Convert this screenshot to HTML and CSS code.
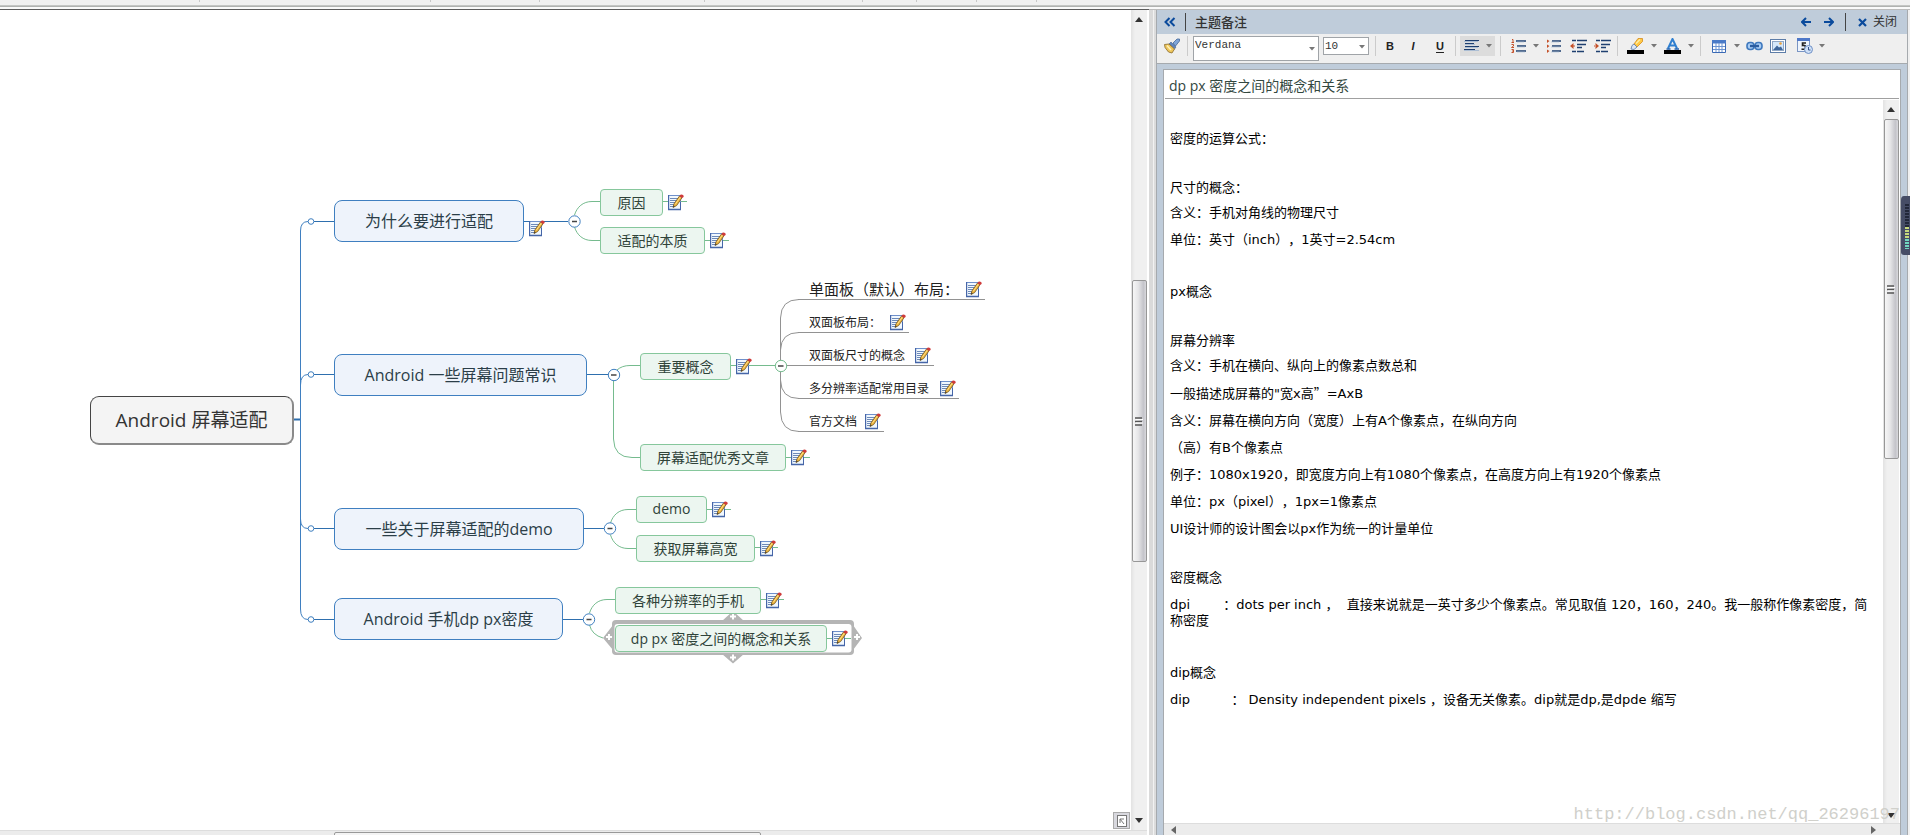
FILE: index.html
```html
<!DOCTYPE html>
<html lang="zh-CN">
<head>
<meta charset="utf-8">
<title>Android 屏幕适配</title>
<link rel="stylesheet" href="styles.css">
</head>
<body>
<svg class="defs" aria-hidden="true">
  <symbol id="note" viewBox="0 0 16 17">
    <rect x="0.5" y="1.5" width="12" height="14" fill="#f1f8fe" stroke="#6f90cb"/>
    <path d="M0.5 1V16M0 15.5H13" stroke="#4666a8" stroke-width="1.4"/>
    <path d="M12.5 8V16" stroke="#4666a8"/>
    <path d="M2 4.5H10M2 6.5H9M2 8.5H7M2 10.5H6M2 12.5H5" stroke="#6d89b8"/>
    <path d="M5 13.5L6 9.8L11.5 2L14 3.8L8.6 11.6Z" fill="#edb33a" stroke="#75551c" stroke-width=".8"/>
    <path d="M7.2 10.4L12.4 3" stroke="#ffe08a" stroke-width="1"/>
    <path d="M5 13.5L5.6 11.4L6.9 12.3Z" fill="#333"/>
    <path d="M11.4 2.2L12.4.8Q14 0 15.2 1.2T15 3.4L14 4Z" fill="#cf3b3b"/>
  </symbol>
  <symbol id="caret" viewBox="0 0 6 4"><path d="M0 0H6L3 3.5Z" fill="#777"/></symbol>
  <symbol id="up" viewBox="0 0 8 5"><path d="M0 5L4 0L8 5Z" fill="#333"/></symbol>
  <symbol id="down" viewBox="0 0 8 5"><path d="M0 0L4 5L8 0Z" fill="#333"/></symbol>
  <symbol id="grip" viewBox="0 0 8 9"><path d="M0 1H7M0 4.5H7M0 8H7" stroke="#555" stroke-width="1.4"/><path d="M1 2.5H8M1 6H8" stroke="#fff"/></symbol>
</svg>

<div class="strip">
  <i></i><i></i><i></i><i></i><i></i><i></i><i></i><i></i>
</div>

<div class="workspace">
  <main class="map-pane">
    <div class="canvas">
      <svg class="links" aria-hidden="true" fill="none">
        <g stroke="#2e6fae">
          <path d="M293 419.5H300" stroke-width="2"/>
          <path d="M300.5 419V231Q300.5 221.5 308 221.5M300.5 385Q300.5 374.5 308 374.5M300.5 419V519Q300.5 528.5 308 528.5M300.5 519V609Q300.5 619.5 308 619.5" stroke="#3f7fc0"/>
          <path d="M314 221.5H334M314 374.5H334M314 528.5H334M314 619.5H334"/>
          <path d="M524 221.5H568M587 374.5H608M584 528.5H604M563 619.5H583"/>
        </g>
        <g stroke="#75bb8e">
          <path d="M574.5 215C577 207 583 201.5 592 201.5H600M574.5 227C577 235 583 240.5 592 240.5H600"/>
          <path d="M617 370Q622 365.5 630 365.5H640M613.5 381V439Q614 457.5 632 457.5H640"/>
          <path d="M610.5 523C613 515 619 509.5 628 509.5H636M610.5 535C613 543 619 548.5 628 548.5H636"/>
          <path d="M589.5 613C592 605 598 599.5 607 599.5H615M589.5 625Q592 635 603 638"/>
          <path d="M663 201.5H687M705 240.5H729M731 365.5H775M786 457.5H810M707 509.5H731M755 547.5H778M761 599.5H784"/>
        </g>
        <g stroke="#929292">
          <path d="M780.5 360V318Q781 299.5 799 299.5M780.5 350Q781 332.5 799 332.5M787 365.5H799M780.5 380Q781 398.5 799 398.5M780.5 372V412Q781 431.5 799 431.5"/>
        </g>
        <g fill="#fff" stroke="#3f7fc0">
          <circle cx="311" cy="221.5" r="2.8"/><circle cx="311" cy="374.5" r="2.8"/><circle cx="311" cy="528.5" r="2.8"/><circle cx="311" cy="619.5" r="2.8"/>
          <circle cx="574.5" cy="221.5" r="5.7"/><circle cx="614" cy="375" r="5.7"/><circle cx="610" cy="528.5" r="5.7"/><circle cx="589" cy="619.5" r="5.7"/>
          <circle cx="781" cy="366" r="5.7" stroke="#75bb8e"/>
        </g>
        <path d="M572 221.5H577M611 375H616.5M607.5 528.5H612.5M586.5 619.5H591.5M778 366H783.5" stroke="#444" stroke-width="1.5"/>
        <path d="M722 621L733 611L744 621ZM722 654L733 663.5L744 654ZM613 625V650L603 638ZM853 625V650L862 638Z" fill="#b5b5b5"/>
        <rect x="612" y="620" width="242" height="35" rx="4" fill="#b5b5b5"/>
        <rect x="614.5" y="624" width="237" height="28.5" rx="3" fill="#fff"/>
        <path d="M730 616.5H736M733 613.5V619.5M730 657.5H736M733 654.5V660.5M606 637H612M609 634V640M854 637H860M857 634V640" stroke="#fff" stroke-width="2"/>
        <path d="M827 638.5H851" stroke="#75bb8e"/>
      </svg>

      <div class="root">Android 屏幕适配</div>

      <div class="main t1">为什么要进行适配</div>
      <svg class="note t1-note"><use href="#note"/></svg>
      <div class="main t2">Android 一些屏幕问题常识</div>
      <div class="main t3">一些关于屏幕适配的demo</div>
      <div class="main t4">Android 手机dp px密度</div>

      <div class="sub s1"><span>原因</span><svg class="note"><use href="#note"/></svg></div>
      <div class="sub s2"><span>适配的本质</span><svg class="note"><use href="#note"/></svg></div>
      <div class="sub s3"><span>重要概念</span><svg class="note"><use href="#note"/></svg></div>
      <div class="sub s4"><span>屏幕适配优秀文章</span><svg class="note"><use href="#note"/></svg></div>
      <div class="sub s5"><span>demo</span><svg class="note"><use href="#note"/></svg></div>
      <div class="sub s6"><span>获取屏幕高宽</span><svg class="note"><use href="#note"/></svg></div>
      <div class="sub s7"><span>各种分辨率的手机</span><svg class="note"><use href="#note"/></svg></div>
      <div class="sub s8"><span>dp px 密度之间的概念和关系</span><svg class="note"><use href="#note"/></svg></div>

      <div class="leaf l1"><span>单面板（默认）布局：</span><svg class="note"><use href="#note"/></svg></div>
      <div class="leaf l2"><span>双面板布局：</span><svg class="note"><use href="#note"/></svg></div>
      <div class="leaf l3"><span>双面板尺寸的概念</span><svg class="note"><use href="#note"/></svg></div>
      <div class="leaf l4"><span>多分辨率适配常用目录</span><svg class="note"><use href="#note"/></svg></div>
      <div class="leaf l5"><span>官方文档</span><svg class="note"><use href="#note"/></svg></div>

      <button class="overview" aria-label="缩略图"><svg width="10" height="12" viewBox="0 0 10 12" fill="none" stroke="#777"><rect x=".5" y=".5" width="9" height="11" fill="#fff"/><path d="M3 8V4H7M3 4L7 9"/></svg></button>
    </div>
    <div class="vbar map-vbar">
      <svg class="arrow"><use href="#up"/></svg>
      <div class="thumb"><svg class="grip"><use href="#grip"/></svg></div>
      <svg class="arrow"><use href="#down"/></svg>
    </div>
    <div class="map-hbar"><div class="hthumb"></div></div>
  </main>

  <div class="splitter"></div>

  <aside class="panel">
    <header class="panel-head">
      <button class="collapse" aria-label="折叠"><svg width="12" height="10" viewBox="0 0 12 10" fill="none" stroke="#0a4a9c" stroke-width="2"><path d="M5.5 1L1.5 5L5.5 9M10.5 1L6.5 5L10.5 9"/></svg></button>
      <i class="bar"></i>
      <h1>主题备注</h1>
      <button class="nav" aria-label="上一个"><svg width="10" height="10" viewBox="0 0 10 10" fill="none" stroke="#0a4a9c" stroke-width="2"><path d="M10 5H1.5M5 1L1 5L5 9"/></svg></button>
      <button class="nav" aria-label="下一个"><svg width="10" height="10" viewBox="0 0 10 10" fill="none" stroke="#0a4a9c" stroke-width="2"><path d="M0 5H8.5M5 1L9 5L5 9"/></svg></button>
      <i class="bar"></i>
      <button class="close"><svg width="9" height="9" viewBox="0 0 9 9" fill="none" stroke="#0a4a9c" stroke-width="2.2"><path d="M1 1L8 8M8 1L1 8"/></svg>关闭</button>
    </header>

    <div class="toolbar">
      <button aria-label="格式刷"><svg width="16" height="16" viewBox="0 0 16 16"><path d="M9 5L13 1H15.5V3L11.5 8Z" fill="#7fa5d8" stroke="#44689a" stroke-width=".8"/><path d="M7 4L12 9L10.5 11L5 6Z" fill="#5e84bd" stroke="#3f5f8e" stroke-width=".6"/><path d="M5 6L10.5 11L8 15L4.5 14L1 9.5L.5 6.5Z" fill="#eec65c" stroke="#8a6a28" stroke-width=".8"/><path d="M3 7.5L7 12" stroke="#fff1b8" stroke-width="1.5"/></svg></button>
      <i class="sep m6"></i>
      <label class="pick font m5"><select aria-label="字体"><option>Verdana</option></select><svg><use href="#caret"/></svg></label>
      <label class="pick size m4"><select aria-label="字号"><option>10</option></select><svg><use href="#caret"/></svg></label>
      <i class="sep m6"></i>
      <button class="m5 txt b" aria-label="加粗">B</button>
      <button class="m5 txt i" aria-label="斜体">I</button>
      <button class="m9 txt u" aria-label="下划线">U</button>
      <i class="sep m6"></i>
      <button class="align m4" aria-label="对齐"><svg width="16" height="12" viewBox="0 0 16 12"><path d="M1 .5H15M1 3.5H10M1 6.5H15M0 9.5H11" stroke="#1f3f6e"/><path d="M0 1.5H14M1 4.5H11M1 7.5H14M0 10.5H15" stroke="#9fb6d2" stroke-width=".8"/></svg><svg class="caret"><use href="#caret"/></svg></button>
      <i class="sep m5"></i>
      <button class="m9" aria-label="编号列表"><svg width="16" height="14" viewBox="0 0 16 14" fill="none"><path d="M5 2H15M6 7H15M5 12H15" stroke="#1f4070" stroke-width="1.5"/><path d="M6 3H13M6 8H14M6 13H14" stroke="#a4b9d2" stroke-width=".6"/><path d="M1 .5H2V3.5M.5 3.5H3M.5 5.5H2.5V7L.5 8.5H3M.5 10.5H2.5V13.5H.5M1 12H2.5" stroke="#c4512a"/></svg></button>
      <button class="drop m4" aria-label="编号样式"><svg class="caret"><use href="#caret"/></svg></button>
      <button class="m5" aria-label="项目列表"><svg width="16" height="14" viewBox="0 0 16 14"><path d="M6 2H15M6 7H15M6 12H15" stroke="#1f4070" stroke-width="1.5"/><path d="M5 3H13M5 8H14M5 13H13" stroke="#a4b9d2" stroke-width=".6"/><path d="M1 .5V4L3.5 2ZM1 5.5V9L3.5 7ZM1 10.5V14L3.5 12Z" fill="#c4512a"/></svg></button>
      <button class="m6" aria-label="减少缩进"><svg width="17" height="14" viewBox="0 0 17 14"><path d="M2 1.5H6M7 1.5H17M7 5.5H16M7 8.5H12M2 12.5H6M7 12.5H14" stroke="#1f4070" stroke-width="1.6"/><path d="M0 7L3.5 4V10ZM3 6.5H5V7.5H3Z" fill="#c4512a"/></svg></button>
      <button class="m6" aria-label="增加缩进"><svg width="17" height="14" viewBox="0 0 17 14"><path d="M2 1.5H6M7 1.5H17M7 5.5H16M7 8.5H12M2 12.5H6M7 12.5H14" stroke="#1f4070" stroke-width="1.6"/><path d="M5 7L1.5 4V10ZM0 6.5H2V7.5H0Z" fill="#c4512a"/></svg></button>
      <i class="sep m6"></i>
      <button class="m9" aria-label="突出显示"><svg width="18" height="16" viewBox="0 0 18 16"><path d="M7 6L11 .5H15.5V3.5L10 9Z" fill="#ffc845" stroke="#d48b1c" stroke-width=".8"/><path d="M7 6L10 9L7 11.5L4 11L5 7.5Z" fill="#dbe7f6" stroke="#5877a8" stroke-width=".8"/><path d="M9 5.5L13 1.5" stroke="#fff0a8" stroke-width="1.3"/><path d="M0 12H17V16H0Z" fill="#000"/></svg></button>
      <button class="drop m5" aria-label="突出显示颜色"><svg class="caret"><use href="#caret"/></svg></button>
      <button class="m6" aria-label="字体颜色"><svg width="18" height="16" viewBox="0 0 18 16" fill="none"><path d="M4 10.5L8.5 1L13 10.5M5.5 7.5H11.5" stroke="#2f7fd0" stroke-width="2"/><path d="M2.5 11H6.5M10.5 11H15" stroke="#1f5fae" stroke-width="1.3"/><path d="M0 12H17V16H0Z" fill="#000"/></svg></button>
      <button class="drop m5" aria-label="选择字体颜色"><svg class="caret"><use href="#caret"/></svg></button>
      <i class="sep m5"></i>
      <button class="m9" aria-label="表格"><svg width="14" height="13" viewBox="0 0 14 13"><path d="M.5 .5H13.5V12.5H.5Z" fill="#fff" stroke="#3b6ab5"/><path d="M0 0H14V3.5H0Z" fill="#4a7bc8"/><path d="M4 3V12M7 3V12M10 3V12M1 6.5H13M1 9.5H13" stroke="#6d95d2"/></svg></button>
      <button class="drop m5" aria-label="表格选项"><svg class="caret"><use href="#caret"/></svg></button>
      <button class="m4" aria-label="超链接"><svg width="17" height="10" viewBox="0 0 17 10" fill="none"><rect x="1" y="1.5" width="7" height="7" rx="3" fill="#a9cdf5" stroke="#3e78bd" stroke-width="1.6"/><rect x="9" y="1.5" width="7" height="7" rx="3" fill="#a9cdf5" stroke="#3e78bd" stroke-width="1.6"/><path d="M4 5H13" stroke="#2a5c9f" stroke-width="2.4"/></svg></button>
      <button class="m6" aria-label="图片"><svg width="16" height="14" viewBox="0 0 16 14"><rect x=".5" y=".5" width="15" height="13" fill="#fff" stroke="#5d7da8"/><rect x="2.5" y="2.5" width="11" height="9" fill="#d5e8fb" stroke="#8fa6c4"/><path d="M3 11L7 6.5L9 8.5L11 7.5L13 11Z" fill="#3f679c"/><circle cx="10.5" cy="4.5" r="1.3" fill="#eaa03b"/></svg></button>
      <button class="m9" aria-label="日期时间"><svg width="16" height="16" viewBox="0 0 16 16" fill="none"><rect x=".5" y="1.5" width="12" height="12" fill="#eef4fc" stroke="#7a95c4"/><path d="M0 0H13V3H0Z" fill="#4f78c8"/><path d="M9 5H5.5V7.5Q9 7 8.5 9.5T4.5 11" stroke="#222" stroke-width="1.6"/><circle cx="11.5" cy="11.5" r="4" fill="#cfe1f8" stroke="#6f8fc4"/><path d="M11.5 9V12H13.5" stroke="#33508a"/></svg></button>
      <button class="drop m4" aria-label="日期时间选项"><svg class="caret"><use href="#caret"/></svg></button>
    </div>

    <div class="frame">
      <div class="paper">
        <h2>dp px 密度之间的概念和关系</h2>
        <div class="scroll">
          <article class="notes">
            <p class="cjk">密度的运算公式：</p>
            <p class="cjk gap">尺寸的概念：</p>
            <p class="cjk">含义：手机对角线的物理尺寸</p>
            <p>单位：英寸（inch），1英寸=2.54cm</p>
            <p class="gap">px概念</p>
            <p class="cjk gap">屏幕分辨率</p>
            <p class="cjk">含义：手机在横向、纵向上的像素点数总和</p>
            <p>一般描述成屏幕的"宽x高<span class="wide">”</span>=AxB</p>
            <p>含义：屏幕在横向方向（宽度）上有A个像素点，在纵向方向</p>
            <p>（高）有B个像素点</p>
            <p>例子：1080x1920，即宽度方向上有1080个像素点，在高度方向上有1920个像素点</p>
            <p>单位：px（pixel），1px=1像素点</p>
            <p>UI设计师的设计图会以px作为统一的计量单位</p>
            <p class="cjk gap">密度概念</p>
            <p>dpi        ：dots per inch ，  直接来说就是一英寸多少个像素点。常见取值 120，160，240。我一般称作像素密度，简称密度</p>
            <p class="gap">dip概念</p>
            <p>dip          ： Density independent pixels ，设备无关像素。dip就是dp,是dpde 缩写</p>
          </article>
          <div class="vbar note-vbar">
            <svg class="arrow"><use href="#up"/></svg>
            <div class="thumb"><svg class="grip"><use href="#grip"/></svg></div>
            <svg class="arrow"><use href="#down"/></svg>
          </div>
        </div>
        <div class="note-hbar">
          <svg width="5" height="8" viewBox="0 0 5 8"><path d="M5 0L0 4L5 8Z" fill="#666"/></svg>
          <svg width="5" height="8" viewBox="0 0 5 8"><path d="M0 0L5 4L0 8Z" fill="#666"/></svg>
        </div>
      </div>
    </div>
  </aside>
</div>

<svg class="meter" width="10" height="60" viewBox="0 0 10 60" aria-hidden="true">
  <path d="M10 0H4Q1 0 1 4V56Q1 59 4 59H10Z" fill="#464d66"/>
  <path d="M7 8V31" stroke="#22283a" stroke-width="4" stroke-dasharray="2 1"/>
  <path d="M7 31V43" stroke="#c5d87c" stroke-width="4" stroke-dasharray="2 1"/>
  <path d="M7 43V53" stroke="#70d8c0" stroke-width="4" stroke-dasharray="2 1"/>
</svg>
<div class="watermark">http://blog.csdn.net/qq_26296197</div>
</body>
</html>
```
FILE: styles.css
```css
* { box-sizing: border-box; }

html, body { height: 100%; }

body {
  margin: 0;
  display: flex;
  flex-direction: column;
  overflow: hidden;
  background: #f0f0f0;
  font-family: "Open Sans", "Noto Sans CJK SC", sans-serif;
  text-spacing-trim: space-all;
}

button {
  border: 0;
  padding: 0;
  background: none;
  color: inherit;
  font: inherit;
}

.defs { position: absolute; width: 0; height: 0; }

/* Bottom edge of the window's tool strip */
.strip {
  position: relative;
  flex: none;
  height: 10px;
  background: linear-gradient(#f0f0f0 5px, #c4c6c4 5px 6px, #b0b2b0 6px 7px, #fafafa 7px 9px, #bbb 9px);
}
.strip i { position: absolute; top: 0; width: 1px; height: 2px; background: #c8c8c8; }
.strip i:nth-child(1) { left: 199px; }
.strip i:nth-child(2) { left: 430px; }
.strip i:nth-child(3) { left: 539px; }
.strip i:nth-child(4) { left: 704px; }
.strip i:nth-child(5) { left: 862px; }
.strip i:nth-child(6) { left: 916px; }
.strip i:nth-child(7) { left: 976px; }
.strip i:nth-child(8) { left: 1036px; }

.workspace {
  flex: 1;
  min-height: 0;
  display: grid;
  grid-template-columns: 1149fr 7px 752fr 2px;
}

/* Mind map pane */
.map-pane {
  position: relative;
  display: grid;
  grid-template-columns: 1fr 16px;
  grid-template-rows: 1fr 5px;
  padding-right: 2px;
  min-height: 0;
  background: #fff;
  box-shadow: 0 -1px #5c5c5c;
}
.canvas { position: relative; overflow: hidden; background: #fff; }
.links { position: absolute; left: 0; top: -10px; width: 100%; height: 100%; overflow: visible; }
.map-hbar { background: #ececec; border-top: 1px solid #ddd; padding: 1px 0 0 334px; grid-column: 1 / -1; }
.hthumb { width: 427px; height: 6px; border: 1px solid #999; border-radius: 2px 2px 0 0; background: #f4f4f4; }

.root, .main, .sub, .leaf, .t1-note { position: absolute; }
.root, .main, .sub span {
  display: flex;
  align-items: center;
  padding-bottom: 2px;
  white-space: nowrap;
}

.root {
  left: 90px;
  top: 386px;
  width: 204px;
  height: 49px;
  justify-content: center;
  border: 1px solid #444;
  border-bottom: 2px solid #8a8a8a;
  border-right: 2px solid #8a8a8a;
  border-radius: 9px;
  background: #f4f4f4;
  color: #333;
  font-size: 19px;
}
.main {
  left: 334px;
  height: 42px;
  justify-content: center;
  border: 1px solid #3f7fc0;
  border-radius: 8px;
  background: #eef3fb;
  color: #2b3e48;
  font-size: 16px;
}
.t1 { top: 190px; width: 190px; }
.t2 { top: 344px; width: 253px; }
.t3 { top: 498px; width: 250px; }
.t4 { top: 588px; width: 229px; }
.t1-note { left: 529px; top: 210px; }

.note { flex: none; width: 16px; height: 17px; }

.sub { display: flex; align-items: center; gap: 5px; }
.sub span {
  height: 27px;
  justify-content: center;
  border: 1px solid #86c79c;
  border-radius: 4px;
  background: #ecf6f0;
  color: #2f4339;
  font-size: 14px;
}
.s1 { left: 600px; top: 179px; }
.s2 { left: 600px; top: 217px; }
.s3 { left: 640px; top: 343px; }
.s4 { left: 640px; top: 434px; }
.s5 { left: 636px; top: 486px; }
.s6 { left: 636px; top: 525px; }
.s7 { left: 615px; top: 577px; }
.s8 { left: 615px; top: 615px; }
.s1 span { width: 63px; }
.s2 span { width: 105px; }
.s3 span { width: 91px; }
.s4 span { width: 146px; }
.s5 span { width: 71px; }
.s6 span { width: 119px; }
.s7 span { width: 146px; }
.s8 span { width: 212px; }

.leaf {
  left: 798px;
  display: flex;
  align-items: flex-end;
  justify-content: space-between;
  padding: 0 3px 1px 11px;
  border-bottom: 1px solid #929292;
  color: #222;
  font-size: 12px;
  line-height: 17px;
  white-space: nowrap;
}
.leaf span { height: 17px; }
.l1 { top: 271px; width: 187px; font-size: 15px; }
.l2 { top: 304px; width: 111px; }
.l3 { top: 337px; width: 136px; }
.l4 { top: 370px; width: 161px; }
.l5 { top: 403px; width: 86px; }

.overview {
  position: absolute;
  right: 1px;
  bottom: 1px;
  width: 17px;
  height: 17px;
  display: grid;
  place-items: center;
  border: 1px solid #aaa;
  background: #d8d8de;
}

/* Scroll bars */
.vbar {
  display: flex;
  flex-direction: column;
  align-items: center;
  background: linear-gradient(90deg, #e2e2e2, #f0f0f0 4px);
}
.arrow { flex: none; width: 8px; height: 5px; }
.thumb {
  width: 15px;
  display: grid;
  place-items: center;
  border: 1px solid #979797;
  border-radius: 2px;
  background: linear-gradient(90deg, #f6f6f6, #e6e6e8 40%, #c4c4ca 80%, #d8d8dc);
}
.grip { width: 8px; height: 9px; }
.map-vbar { padding: 7px 0; }
.map-vbar .thumb { height: 282px; margin: 258px 0 auto; }

.splitter { background: linear-gradient(90deg, #dadada 4px, #f2f2f2 4px 5px, #dcdcdc 5px); }

/* Notes panel */
.panel {
  display: flex;
  flex-direction: column;
  min-width: 0;
  min-height: 0;
  border: solid #a6aaae;
  border-width: 0 1px;
  background: #bfccda;
  box-shadow: 0 -1px #a6aaae;
}
.panel-head {
  flex: none;
  display: flex;
  align-items: center;
  height: 24px;
  padding: 0 10px 0 7px;
  color: #333;
}
.panel-head button { display: flex; align-items: center; }
.panel-head .bar { width: 1px; height: 18px; background: #444; }
.panel-head h1 {
  flex: 1;
  margin: 0 0 0 9px;
  font-size: 13px;
  font-weight: 500;
  line-height: 20px;
}
.collapse { margin-right: 9px; }
.nav { margin-right: 13px; }
.nav + .bar { margin-left: -2px; }
.close { gap: 6px; margin-left: 12px; font-size: 12px; line-height: 18px; }

.toolbar {
  flex: none;
  display: flex;
  height: 30px;
  padding: 2px 0 0 6px;
  border-bottom: 1px solid #a6aaae;
  background: #efefef;
}
.toolbar > button {
  flex: none;
  display: flex;
  align-items: center;
  justify-content: center;
  width: 18px;
  height: 20px;
}
.toolbar .caret { width: 6px; height: 4px; }
.toolbar > .drop { width: 8px; }
.toolbar > .align { width: 35px; gap: 6px; background: #dcdcdc; }
.sep { flex: none; width: 1px; height: 20px; background: #cbcbcb; }
.m4 { margin-left: 4px; }
.m5 { margin-left: 5px; }
.m6 { margin-left: 6px; }
.m9 { margin-left: 9px; }

.toolbar .txt { color: #222; font: bold 11px/16px "Liberation Sans", sans-serif; }
.toolbar .i { font-style: italic; }
.toolbar .u { text-decoration: underline; text-underline-offset: 2px; text-decoration-thickness: 1px; }

.pick { position: relative; flex: none; }
.pick select {
  display: block;
  width: 100%;
  height: 100%;
  padding: 0 0 0 1px;
  appearance: none;
  border: 1px solid #a0a4a8;
  border-radius: 0;
  background: #fff;
  color: #333;
  font: 11px "Liberation Mono", monospace;
}
.pick svg { position: absolute; right: 4px; width: 6px; height: 4px; }
.font { width: 126px; height: 25px; }
.font select { padding-bottom: 8px; }
.size { width: 46px; height: 18px; margin-top: 1px; }
.font svg { top: 11px; }
.size svg { top: 8px; }

.frame { flex: 1; min-height: 0; display: flex; padding: 5px 6px 0; }
.paper {
  flex: 1;
  min-width: 0;
  display: flex;
  flex-direction: column;
  border: 1px solid #a6aaae;
  border-bottom: 0;
  background: #fff;
}
.paper h2 {
  flex: none;
  margin: 0 1px;
  padding: 2px 0 0 4px;
  height: 29px;
  border-bottom: 1px solid #a0a0a0;
  color: #33483f;
  font-size: 14px;
  font-weight: 400;
  line-height: 28px;
}
.scroll { flex: 1; min-height: 0; display: flex; }
.notes {
  flex: 1;
  min-width: 0;
  overflow: hidden;
  padding: 23px 14px 0 6px;
  color: #000;
  font: 13px/16px "DejaVu Sans", "Noto Sans CJK SC", sans-serif;
}
.notes p { margin: 11px 0 0; white-space: pre-wrap; }
.notes .cjk { margin-top: 9px; }
.notes .gap { margin-top: 36px; }
.notes .cjk.gap { margin-top: 33px; }
.wide { font-family: "Noto Sans CJK SC", sans-serif; }

.note-vbar { width: 16px; margin: 1px 1px 0 0; padding: 7px 0 5px; }
.note-vbar .thumb { height: 340px; margin: 7px 0 auto; }
.note-hbar {
  flex: none;
  display: flex;
  justify-content: space-between;
  align-items: center;
  height: 12px;
  padding: 0 24px 0 7px;
  border-top: 1px solid #ddd;
  background: #ececec;
}

/* Floating desktop widget over the right edge */
.meter { position: absolute; right: 0; top: 196px; }

.watermark {
  position: absolute;
  right: 10px;
  bottom: 10px;
  color: #d0d0cb;
  font: 17px/20px "Liberation Mono", monospace;
  pointer-events: none;
}
```
